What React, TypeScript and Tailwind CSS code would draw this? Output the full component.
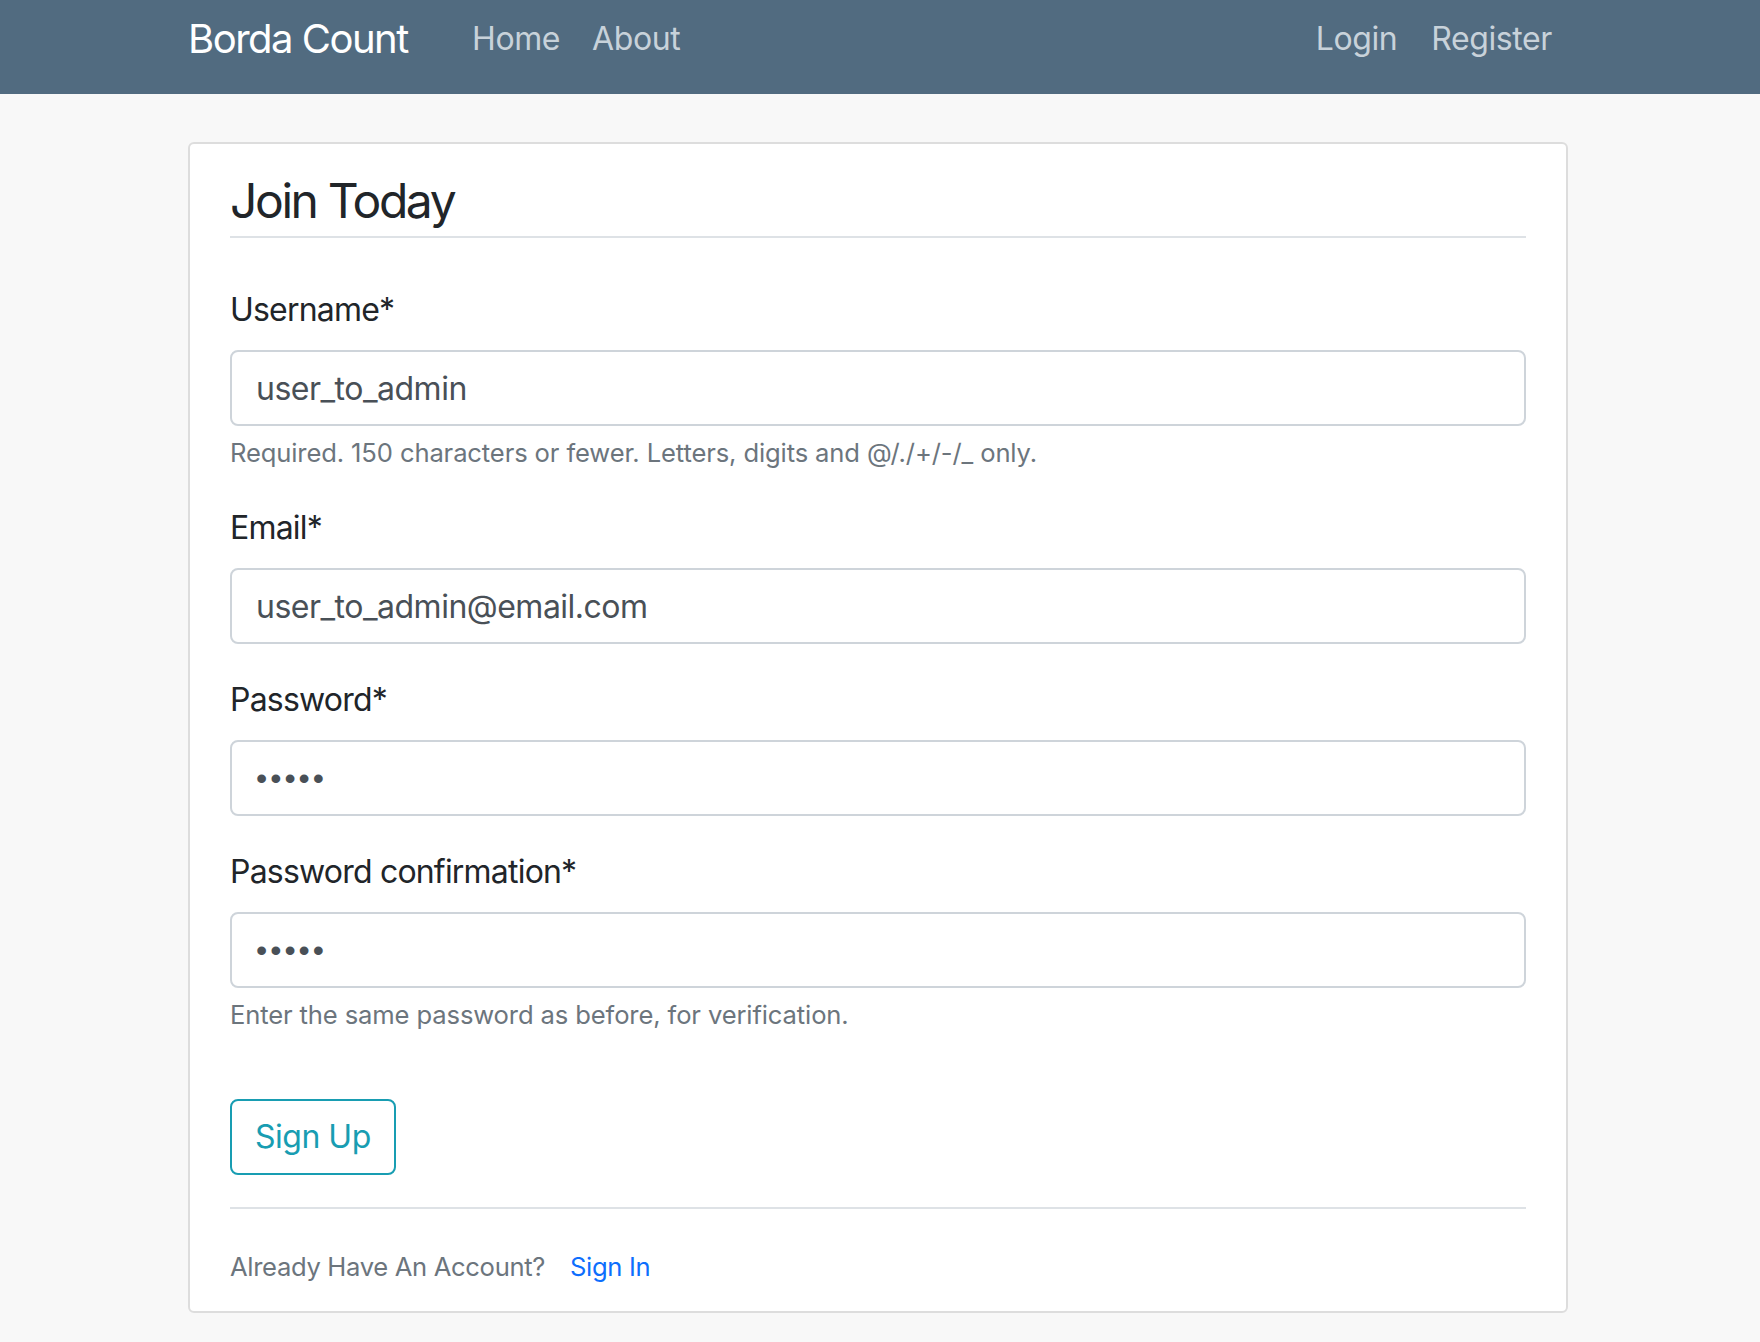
import React from "react";

const font = "font-['Inter','Liberation_Sans',sans-serif]";

interface FieldProps {
  label: string;
  value: string;
  type?: string;
  help?: string;
}

const Field: React.FC<FieldProps> = ({ label, value, type = "text", help }) => {
  const isPassword = type === "password";
  return (
    <div className="mb-[32px]">
      <label className="block mb-[16px] text-[32px] leading-[48px] tracking-[-0.8px] text-[#212529]">
        {label}
      </label>
      <input
        type={type}
        value={value}
        readOnly
        className={`block w-full h-[76px] px-[24px] border-2 border-[#ced4da] rounded-[8px] bg-white text-[32px] text-[#495057] outline-none ${
          isPassword ? "font-['Liberation_Sans',sans-serif] tracking-[3px]" : `${font} tracking-[-0.5px]`
        }`}
      />
      {help && (
        <div className="mt-[8px] text-[25.6px] leading-[38.4px] tracking-[-0.13px] text-[#6c757d]">{help}</div>
      )}
    </div>
  );
};

export default function App() {
  return (
    <div className={`min-h-[1342px] bg-[#f8f8f8] ${font}`}>
      <header className="h-[94px] bg-[#516b80]">
        <nav className="mx-auto w-[1440px] pl-[28px] pr-[32px] pt-[8px] h-[69px] flex items-center">
          <a className="w-[268px] text-[40px] leading-[60px] tracking-[-1.5px] text-white">Borda Count</a>
          <div className="flex items-center text-[32px] leading-[48px] tracking-[-0.4px] text-[#c8d2da]">
            <a className="px-[16px]">Home</a>
            <a className="px-[16px]">About</a>
          </div>
          <div className="ml-auto flex items-center text-[32px] leading-[48px] tracking-[-0.4px] text-[#c8d2da]">
            <a className="pl-[16px] pr-[18px]">Login</a>
            <a className="px-[16px]">Register</a>
          </div>
        </nav>
      </header>

      <main className="mx-auto w-[1440px] pl-[28px] pr-[32px] pt-[48px]">
        <div className="bg-white border-2 border-[#dddddd] rounded-[6px] px-[40px] pt-[20px] pb-[20px]">
          <form>
            <fieldset className="mb-[32px]">
              <legend className="w-full pt-[8px] pb-[6px] mb-[48px] border-b-2 border-[#dee2e6] text-[48px] leading-[58px] tracking-[-2.4px] text-[#212529]">
                Join Today
              </legend>
              <Field
                label="Username*"
                value="user_to_admin"
                help="Required. 150 characters or fewer. Letters, digits and @/./+/-/_ only."
              />
              <Field label="Email*" value="user_to_admin@email.com" />
              <Field label="Password*" value="12345" type="password" />
              <Field
                label="Password confirmation*"
                value="12345"
                type="password"
                help="Enter the same password as before, for verification."
              />
            </fieldset>
            <div className="mb-[32px]">
              <button
                type="button"
                className="h-[76px] px-[23px] border-2 border-[#189db2] rounded-[8px] text-[32px] leading-[48px] tracking-[-0.5px] text-[#189db2] bg-white"
              >
                Sign Up
              </button>
            </div>
          </form>
          <div className="border-t-2 border-[#dee2e6] pt-[32px] text-[32px] leading-[48px]">
            <span className="text-[25.6px] tracking-[-0.33px] text-[#6c757d]">Already Have An Account?</span>{" "}
            <a className="ml-[16px] text-[25.6px] tracking-[-0.33px] text-[#0d6efd]">Sign In</a>
          </div>
        </div>
      </main>
    </div>
  );
}
